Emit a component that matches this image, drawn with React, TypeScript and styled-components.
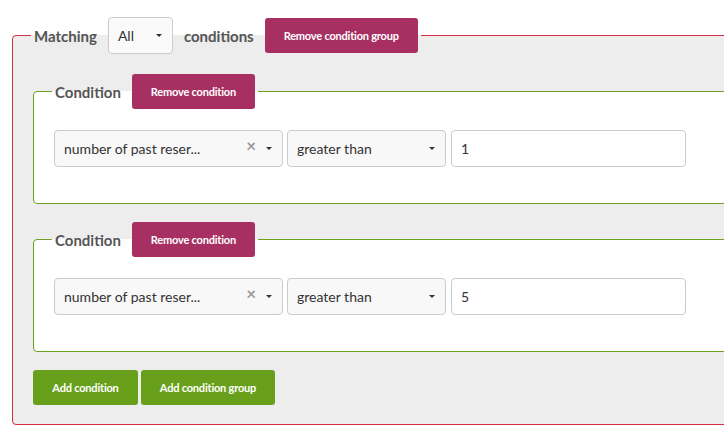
import React from "react";
import styled, { createGlobalStyle } from "styled-components";

const Global = createGlobalStyle`
  html, body { margin: 0; padding: 0; background: #fff; overflow: hidden; }
  body { font-family: Lato, "Open Sans", sans-serif; color: #333; }
  * { box-sizing: border-box; }
`;

const Page = styled.div`
  padding: 17px 0 0 12px;
  width: 800px;
`;

const Group = styled.fieldset<{ $tone: "red" | "green"; $bg: string }>`
  margin: 0;
  padding: 20px 20px ${(p) => (p.$tone === "red" ? "19px" : "36px")} 20px;
  border: 1px solid ${(p) => (p.$tone === "red" ? "#d2303f" : "#6aa21c")};
  border-radius: 4px;
  background: ${(p) => p.$bg};
  width: ${(p) => (p.$tone === "red" ? "760px" : "720px")};
  min-width: 0;
  & + & { margin-top: 18px; }
`;

const Legend = styled.legend<{ $shift: number }>`
  display: flex;
  align-items: center;
  gap: 11px;
  padding: 0 3px 0 3px;
  margin-left: ${(p) => p.$shift}px;
`;

const LegendText = styled.span`
  font-size: 15px;
  font-weight: 700;
  color: #555;
`;

const Button = styled.button<{ $color: "magenta" | "green"; $w: number }>`
  height: 35px;
  width: ${(p) => p.$w}px;
  border: none;
  border-radius: 3px;
  background: ${(p) => (p.$color === "magenta" ? "#a72f62" : "#68a01b")};
  color: #fff;
  font-family: Lato, "Open Sans", sans-serif;
  font-weight: 700;
  font-size: 11px;
  letter-spacing: -0.2px;
  padding: 0;
  cursor: pointer;
`;

const SmallSelect = styled.div`
  width: 65px;
  height: 37px;
  border: 1px solid #ccc;
  border-radius: 4px;
  background: #fafafa;
  display: flex;
  align-items: center;
  justify-content: space-between;
  padding: 0 10px 0 9px;
  font-size: 14px;
  font-weight: 400;
  color: #333;
`;

const Caret = styled.span`
  width: 0;
  height: 0;
  border-left: 3px solid transparent;
  border-right: 3px solid transparent;
  border-top: 3px solid #333;
`;

const Row = styled.div`
  display: flex;
  align-items: center;
  gap: 4px;
`;

const Select = styled.div<{ $w: number }>`
  width: ${(p) => p.$w}px;
  height: 37px;
  margin-top: 1px;
  border: 1px solid #ccc;
  border-radius: 4px;
  background: #f8f8f8;
  display: flex;
  align-items: center;
  padding: 0 10px 0 9px;
  font-size: 14px;
  color: #333;
`;

const SelectValue = styled.span`
  flex: 1;
  white-space: nowrap;
`;

const Clear = styled.span`
  color: #999;
  font-size: 17px;
  font-weight: 700;
  margin-right: 10px;
  margin-top: -6px;
`;

const Input = styled.div`
  width: 235px;
  height: 37px;
  margin-left: 1px;
  border: 1px solid #ccc;
  border-radius: 4px;
  background: #fff;
  display: flex;
  align-items: center;
  padding: 0 9px;
  font-size: 14px;
  color: #333;
`;

const Actions = styled.div`
  display: flex;
  gap: 3px;
  margin-top: 18px;
`;

const Condition = ({ value }: { value: string }) => (
  <Group $tone="green" $bg="#fff">
    <Legend $shift={-2}>
      <LegendText>Condition</LegendText>
      <Button $color="magenta" $w={123}>Remove condition</Button>
    </Legend>
    <Row>
      <Select $w={229}>
        <SelectValue>number of past reser...</SelectValue>
        <Clear>×</Clear>
        <Caret />
      </Select>
      <Select $w={159}>
        <SelectValue>greater than</SelectValue>
        <Caret />
      </Select>
      <Input>{value}</Input>
    </Row>
  </Group>
);

export default function App() {
  return (
    <>
      <Global />
      <Page>
        <Group $tone="red" $bg="#ededed">
          <Legend $shift={-2}>
            <LegendText>Matching</LegendText>
            <SmallSelect>
              All
              <Caret />
            </SmallSelect>
            <LegendText>conditions</LegendText>
            <Button $color="magenta" $w={153}>Remove condition group</Button>
          </Legend>
          <Condition value="1" />
          <Condition value="5" />
          <Actions>
            <Button $color="green" $w={105}>Add condition</Button>
            <Button $color="green" $w={134}>Add condition group</Button>
          </Actions>
        </Group>
      </Page>
    </>
  );
}
